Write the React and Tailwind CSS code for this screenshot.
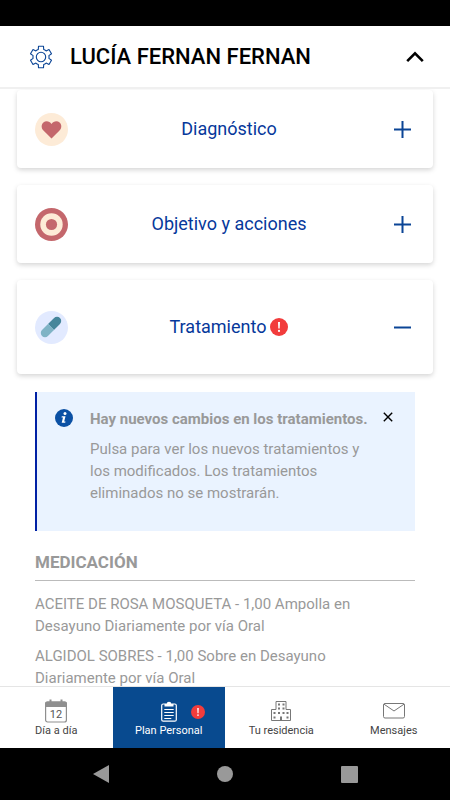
import { useState } from "react";

const medicacion = [
  "ACEITE DE ROSA MOSQUETA - 1,00 Ampolla en Desayuno Diariamente por vía Oral",
  "ALGIDOL SOBRES - 1,00 Sobre en Desayuno Diariamente por vía Oral",
];

/* ===== ICONS ===== */
function GearIcon() {
  return (
    <svg width="24" height="24" viewBox="0 0 24 24" fill="none" stroke="#0b4596" strokeWidth="1.1" strokeLinejoin="round">
      <path d="M9.5 1.3h5l.2 3.2q1.3.4 2.400 1.400L20 4.500l2.500 4.300-2.600 1.800q.3 1.400 0 2.800l2.600 1.800L20 19.500l-2.900-1.400q-1.100 1-2.400 1.400l-.2 3.200h-5l-.2-3.200q-1.300-.4-2.400-1.400L4 19.500l-2.500-4.300 2.600-1.800q-.3-1.400 0-2.800L1.500 8.800 4 4.500l2.900 1.400q1.100-1 2.400-1.400z" />
      <circle cx="12" cy="12" r="4.7" />
    </svg>
  );
}

function HeartIcon() {
  return (
    <svg width="33" height="33" viewBox="0 0 33 33">
      <circle cx="16.5" cy="16.5" r="16.5" fill="#fdebd7" />
      <path
        d="M16.500 25.500 8.700 17.800C5.900 15 6.200 11.200 8.400 9.400c2.500-2 6.200-1.300 8.100 1.500 1.900-2.800 5.600-3.500 8.100-1.500 2.200 1.800 2.500 5.600-.3 8.400z"
        fill="#c4676c"
      />
    </svg>
  );
}

function TargetIcon() {
  return (
    <svg width="33" height="33" viewBox="0 0 33 33">
      <circle cx="16.5" cy="16.5" r="16.5" fill="#c4676c" />
      <circle cx="16.5" cy="16.5" r="11.2" fill="#fdebd7" />
      <circle cx="16.5" cy="16.5" r="5.6" fill="#c4676c" />
    </svg>
  );
}

function PillIcon() {
  return (
    <svg width="33" height="33" viewBox="0 0 33 33">
      <circle cx="16.5" cy="16.5" r="16.5" fill="#e2eaff" />
      <g transform="rotate(45 16 16)">
        <path d="M11.800 16V7.500a4.200 4.200 0 0 1 8.400 0V16z" fill="#46869b" />
        <path d="M11.800 16v8.500a4.200 4.200 0 0 0 8.400 0V16z" fill="#7fb3c5" />
      </g>
    </svg>
  );
}

function CalendarIcon() {
  return (
    <svg width="22" height="24" viewBox="0 0 22 24" fill="none">
      <rect x=".6" y="3" width="20.8" height="20" rx="2" stroke="#8f8f8f" strokeWidth="1.2" />
      <path d="M0 8V4.500a2 2 0 0 1 2-2h18a2 2 0 0 1 2 2V8z" fill="#8f8f8f" />
      <path d="M5.500 .5v4M16.500 .5v4" stroke="#8f8f8f" strokeWidth="2" />
      <text x="11" y="18.5" textAnchor="middle" fontSize="11" fontFamily="Roboto, sans-serif" fill="#555">
        12
      </text>
    </svg>
  );
}

function ClipboardIcon() {
  return (
    <svg width="16" height="21" viewBox="0 0 16 21" fill="none" stroke="#fff">
      <rect x=".7" y="3" width="14.6" height="17.2" rx="1.5" strokeWidth="1.2" />
      <path d="M3.500 5.500V3h2.200a2.300 2.300 0 0 1 4.600 0h2.200v2.500z" fill="#fff" stroke="none" />
      <path d="M3.300 8.500h9.400M3.300 11.500h9.400M3.300 14.500h9.400M3.300 17.500h7" strokeWidth="1" />
    </svg>
  );
}

function BuildingIcon() {
  return (
    <svg width="20" height="20" viewBox="0 0 20 20" fill="none" stroke="#777">
      <path d="M.5 19.500v-11h4.500V.5h10v8h4.500v11z" />
      <path d="M7 3.500h2M11.500 3.500h2M7 7.500h2M11.500 7.500h2M2.500 12h2M7 12h2M11.500 12h2M15.500 12h2M2.500 16.500h2M15.500 16.500h2" strokeWidth="1.8" />
      <path d="M10 15.500v4" strokeWidth="2" />
    </svg>
  );
}

function MailIcon() {
  return (
    <svg width="22" height="16" viewBox="0 0 22 16" fill="none" stroke="#777">
      <rect x=".5" y=".5" width="21" height="14.5" rx="1.5" />
      <path d="m1 1.200 10 6.800 10-6.800" />
    </svg>
  );
}

function AlertDot({ size }) {
  return (
    <svg width={size} height={size} viewBox="0 0 18 18">
      <circle cx="9" cy="9" r="9" fill="#f23c3c" />
      <path d="M8 4h2l-.3 6.500H8.300z" fill="#fff" />
      <circle cx="9" cy="12.9" r="1.1" fill="#fff" />
    </svg>
  );
}

const secciones = [
  { id: "diagnostico", label: "Diagnóstico", Icon: HeartIcon, padding: "py-[22px]" },
  { id: "objetivo", label: "Objetivo y acciones", Icon: TargetIcon, padding: "py-[22px]" },
  { id: "tratamiento", label: "Tratamiento", Icon: PillIcon, padding: "py-[30px]", alerta: true },
];

const tabs = [
  { label: "Día a día", Icon: CalendarIcon },
  { label: "Plan Personal", Icon: ClipboardIcon, alerta: true },
  { label: "Tu residencia", Icon: BuildingIcon },
  { label: "Mensajes", Icon: MailIcon },
];

export default function App() {
  const [abierta, setAbierta] = useState("tratamiento");
  const [aviso, setAviso] = useState(true);
  const [tab, setTab] = useState("Plan Personal");

  return (
    <div className="h-screen flex flex-col bg-white font-[Roboto,sans-serif]">
      <div className="h-[26px] shrink-0 bg-black" />

      {/* HEADER */}
      <header className="shrink-0 flex items-center pl-[29px] pr-[26px] h-[63px] border-b-2 border-[#f0f0f0]">
        <button aria-label="Ajustes">
          <GearIcon />
        </button>
        <h1 className="flex-1 ml-[17px] text-[22px] font-medium text-black">
          LUCÍA FERNAN FERNAN
        </h1>
        <button aria-label="Plegar">
          <svg width="18" height="12" viewBox="0 0 18 12" fill="none" stroke="#000" strokeWidth="2.6">
            <path d="m1.200 10.200 7.800-7.800 7.800 7.800" />
          </svg>
        </button>
      </header>

      {/* CONTENT */}
      <main className="flex-1 min-h-0 overflow-y-auto [scrollbar-width:none] px-[17px] pt-px">
        <div className="flex flex-col gap-[17px]">
          {secciones.map(({ id, label, Icon, padding, alerta }) => (
            <button
              key={id}
              onClick={() => setAbierta(abierta === id ? "" : id)}
              aria-expanded={abierta === id}
              className={`flex items-center w-full px-[18px] rounded bg-white shadow-[0_2px_5px_rgba(0,0,0,0.17)] ${padding}`}
            >
              <Icon />
              <span className="flex-1 flex items-center justify-center gap-1 text-lg leading-[34px] text-[#06389b]">
                {label}
                {alerta && <AlertDot size={18} />}
              </span>
              <span className="w-[25px] flex justify-center">
                <svg width="17" height="17" viewBox="0 0 17 17" stroke="#0b4596" strokeWidth="2">
                  <path d={abierta === id ? "M0 8.500h17" : "M0 8.500h17M8.500 0v17"} />
                </svg>
              </span>
            </button>
          ))}
        </div>

        {abierta === "tratamiento" && (
          <div className="px-[18px] pt-[18px] pb-4 text-[#999]">
            {/* AVISO */}
            {aviso && (
              <div className="flex items-start bg-[#eaf3ff] border-l-2 border-[#0021a5] pl-[18px] pr-[22px] pt-4 pb-[27px]">
                <svg className="shrink-0 mt-px" width="18" height="18" viewBox="0 0 18 18">
                  <circle cx="9" cy="9" r="9" fill="#0b50a4" />
                  <circle cx="10" cy="4.6" r="1.5" fill="#fff" />
                  <path d="M6.800 7.300h3.700l-1.300 5.200h1.300l-.3 1.300H6.700l1.300-5.200H6.500z" fill="#fff" />
                </svg>
                <div className="flex-1 ml-[17px] pr-1">
                  <h2 className="text-[15px] leading-[22px] font-bold">
                    Hay nuevos cambios en los tratamientos.
                  </h2>
                  <p className="mt-2 text-[15px] leading-[22px]">
                    Pulsa para ver los nuevos tratamientos y los modificados. Los
                    tratamientos eliminados no se mostrarán.
                  </p>
                </div>
                <button aria-label="Cerrar" className="mt-1" onClick={() => setAviso(false)}>
                  <svg width="10" height="10" viewBox="0 0 10 10" stroke="#000" strokeWidth="1.4">
                    <path d="m.8.8 8.400 8.400M9.200.8.800 9.200" />
                  </svg>
                </button>
              </div>
            )}

            {/* MEDICACION */}
            <h2 className="pt-[19px] pb-[6px] text-[17px] leading-6 font-bold border-b border-[#bbb]">
              MEDICACIÓN
            </h2>
            <ul className="pt-3 pr-4 flex flex-col gap-2 text-[15px] leading-[22px]">
              {medicacion.map((m) => (
                <li key={m}>{m}</li>
              ))}
            </ul>
          </div>
        )}
      </main>

      {/* TABS */}
      <nav className="shrink-0 h-[62px] grid grid-cols-4 bg-white border-t border-[#e5e5e5]">
        {tabs.map(({ label, Icon, alerta }) => (
          <button
            key={label}
            onClick={() => setTab(label)}
            className={`relative flex flex-col items-center pt-3 text-[11px] leading-4 ${
              tab === label ? "bg-[#084a8f] text-white" : "text-[#444]"
            }`}
          >
            <span className="h-6 flex items-center">
              <Icon />
            </span>
            {label}
            {alerta && (
              <span className="absolute top-[18px] right-5">
                <AlertDot size={14} />
              </span>
            )}
          </button>
        ))}
      </nav>

      {/* SYSTEM BAR */}
      <div className="shrink-0 h-[52px] flex items-center justify-center gap-[108px] bg-black">
        <button aria-label="Atrás">
          <svg width="16" height="18" viewBox="0 0 16 18" fill="#999">
            <path d="M0 9 16 0v18z" />
          </svg>
        </button>
        <button aria-label="Inicio" className="size-4 rounded-full bg-[#999]" />
        <button aria-label="Recientes" className="size-[17px] rounded-[1px] bg-[#999]" />
      </div>
    </div>
  );
}
